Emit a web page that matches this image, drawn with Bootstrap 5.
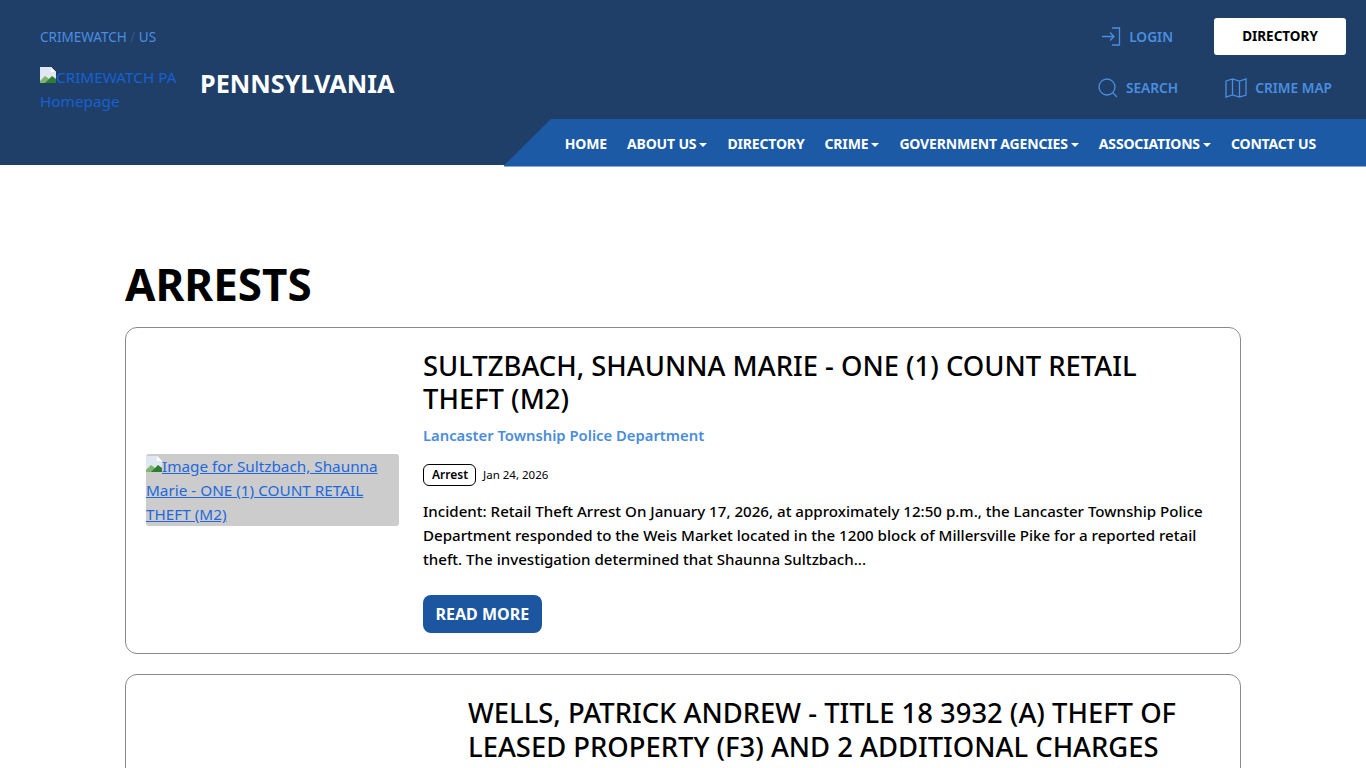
<!DOCTYPE html>
<html lang="en">
<head>
<meta charset="utf-8">
<title>Arrests</title>
<link href="https://cdn.jsdelivr.net/npm/bootstrap@5.3.0/dist/css/bootstrap.min.css" rel="stylesheet">
<style>
html,body{height:768px;overflow:hidden}
body{font-family:"Noto Sans","Open Sans",sans-serif;color:#000;background:#fff}
a{color:#0d5fdc}
.site-head{background:#1f3f68;height:165px}
.head-left{width:504px;padding:28px 0 0 40px}
.crumbs{font-size:13.500px;line-height:18px;color:#4b8ee0}
.crumbs a{color:#4b8ee0;text-decoration:none}
.crumbs span{color:#35598a}
.brand-row{margin-top:19px}
.logo-alt{width:160px;font-size:15.300px;line-height:24px;color:#1860d0;text-decoration:none}
.brand-name{font-size:25.200px;font-weight:700;color:#fff;line-height:32px;margin-top:2px}
.broken{width:16px;height:16px;vertical-align:0}
.head-right{min-width:0}
.row-one{height:55px;padding:18px 20px 0 0;flex:none}
.row-two{height:64px;padding:23px 34px 0 0;flex:none}
.util{color:#4b8ee0;font-size:13.700px;font-weight:600;text-decoration:none}
.util-login{margin-right:41px;margin-top:9px}
.util-search{margin-right:47px}
.btn-dir{background:#fff;color:#000;font-size:13.500px;font-weight:700;width:132px;height:37px;line-height:37px;padding:0;border:0;border-radius:3px}
.btn-dir:hover{background:#fff;color:#000}
.nav-strip{height:47.500px;flex:none;background:#1c5aa6;clip-path:polygon(47px 0,100% 0,100% 100%,-1px 100%);padding-right:40px}
.nav-strip .nav-link{color:#fff;font-size:14px;font-weight:700;padding:0 10px;line-height:50px;letter-spacing:-.16px}
.nav-strip .dropdown-toggle::after{margin-left:3px;vertical-align:2px;border-top-width:4px;border-right-width:4px;border-left-width:4px}
.page-body{width:1116px;margin:0 auto;padding-top:90px}
.page-title{font-size:44px;font-weight:700;line-height:58px;margin:0 0 14px}
.arrest-card{border:1px solid #8a8a8a;border-radius:12px;padding:20px;margin-bottom:20px;background:#fff}
.thumb-col{width:253px;flex:none;margin-right:24px}
.thumb-col-b{width:298px}
.thumb{display:block;background:#ccc;border-radius:3px;font-size:15.300px;line-height:24px;color:#2268dc;margin-top:-1px}
.arrest-title{font-size:27.400px;font-weight:500;line-height:33px;margin:1px 0 0}
.title-wide{line-height:34px}
.agency{display:block;color:#4a8cdc;font-size:14.800px;font-weight:600;line-height:22px;margin-top:9px;text-decoration:none}
.meta{margin-top:18px;font-size:11.500px}
.tag{border:1px solid #000;border-radius:6px;font-size:12px;font-weight:600;line-height:20px;padding:0 7px 0 8px;margin-right:7px}
.summary{font-size:15.100px;font-weight:500;line-height:24px;margin:13px 0 0}
.btn-more{background:#1c56a0;color:#fff;font-size:16px;font-weight:700;border:0;border-radius:8px;padding:0 12.500px;height:38px;line-height:38px;margin-top:24px}
.btn-more:hover{background:#1c56a0;color:#fff}
</style>
</head>
<body>
<header class="site-head d-flex">
  <div class="head-left flex-shrink-0">
    <div class="crumbs"><a href="#">CRIMEWATCH</a> <span>/</span> <a href="#">US</a></div>
    <div class="brand-row d-flex">
      <a class="logo-alt" href="#"><svg class="broken" viewBox="0 0 16 16"><path d="M0 0h11l5 5v11H0z" fill="#dfe8f2"/><path d="M0 14l5-5 3 2 4 5H0z" fill="#7fb56a"/><path d="M5 16l7-7 4 3v4z" fill="#2e7d32"/><path d="M11 0v5h5z" fill="#fff"/></svg>CRIMEWATCH PA Homepage</a>
      <div class="brand-name">PENNSYLVANIA</div>
    </div>
  </div>
  <div class="head-right flex-grow-1 d-flex flex-column">
    <div class="row-one d-flex justify-content-end align-items-start">
      <a href="#" class="util util-login d-flex align-items-center gap-2">
        <svg width="20" height="20" viewBox="0 0 20 20" fill="none" stroke="#4b8ee0" stroke-width="1.3"><path d="M11 1h7.500v17H11"/><path d="M1 9.500h12M9 5.500l4 4-4 4"/></svg>
        LOGIN</a>
      <a href="#" class="btn btn-dir">DIRECTORY</a>
    </div>
    <div class="row-two d-flex justify-content-end align-items-start">
      <a href="#" class="util util-search d-flex align-items-center gap-2">
        <svg width="20" height="20" viewBox="0 0 20 20" fill="none" stroke="#4b8ee0" stroke-width="1.3"><circle cx="9" cy="9" r="8"/><path d="M14.500 14.500l4.500 4.500"/></svg>
        SEARCH</a>
      <a href="#" class="util d-flex align-items-center gap-2">
        <svg width="22" height="20" viewBox="0 0 22 20" fill="none" stroke="#4b8ee0" stroke-width="1.3"><path d="M1 3l6.500-2 7 2L21 1v16l-6.500 2-7-2L1 19zM7.500 1v16M14.500 3v16"/></svg>
        CRIME MAP</a>
    </div>
    <nav class="nav-strip nav justify-content-end flex-nowrap">
      <a class="nav-link" href="#">HOME</a>
      <a class="nav-link dropdown-toggle" href="#">ABOUT US</a>
      <a class="nav-link" href="#">DIRECTORY</a>
      <a class="nav-link dropdown-toggle" href="#">CRIME</a>
      <a class="nav-link dropdown-toggle" href="#">GOVERNMENT AGENCIES</a>
      <a class="nav-link dropdown-toggle" href="#">ASSOCIATIONS</a>
      <a class="nav-link" href="#">CONTACT US</a>
    </nav>
  </div>
</header>
<main class="page-body">
  <h1 class="page-title">ARRESTS</h1>
  <article class="arrest-card d-flex">
    <div class="thumb-col d-flex align-items-center">
      <a class="thumb w-100" href="#"><svg class="broken" viewBox="0 0 16 16"><path d="M0 0h11l5 5v11H0z" fill="#dfe8f2"/><path d="M0 14l5-5 3 2 4 5H0z" fill="#7fb56a"/><path d="M5 16l7-7 4 3v4z" fill="#2e7d32"/><path d="M11 0v5h5z" fill="#fff"/></svg>Image for Sultzbach, Shaunna Marie - ONE (1) COUNT RETAIL THEFT (M2)</a>
    </div>
    <div class="flex-grow-1">
      <h2 class="arrest-title">SULTZBACH, SHAUNNA MARIE - ONE (1) COUNT RETAIL THEFT (M2)</h2>
      <a class="agency" href="#">Lancaster Township Police Department</a>
      <div class="meta d-flex align-items-center"><span class="tag">Arrest</span><span>Jan 24, 2026</span></div>
      <p class="summary">Incident: Retail Theft Arrest On January 17, 2026, at approximately 12:50 p.m., the Lancaster Township Police Department responded to the Weis Market located in the 1200 block of Millersville Pike for a reported retail theft. The investigation determined that Shaunna Sultzbach...</p>
      <a class="btn btn-more" href="#">READ MORE</a>
    </div>
  </article>
  <article class="arrest-card d-flex">
    <div class="thumb-col thumb-col-b"></div>
    <div class="flex-grow-1">
      <h2 class="arrest-title title-wide">WELLS, PATRICK ANDREW - TITLE 18 3932 (A) THEFT OF LEASED PROPERTY (F3) AND 2 ADDITIONAL CHARGES</h2>
    </div>
  </article>
</main>
<script src="https://cdn.jsdelivr.net/npm/bootstrap@5.3.0/dist/js/bootstrap.bundle.min.js"></script>
</body>
</html>
